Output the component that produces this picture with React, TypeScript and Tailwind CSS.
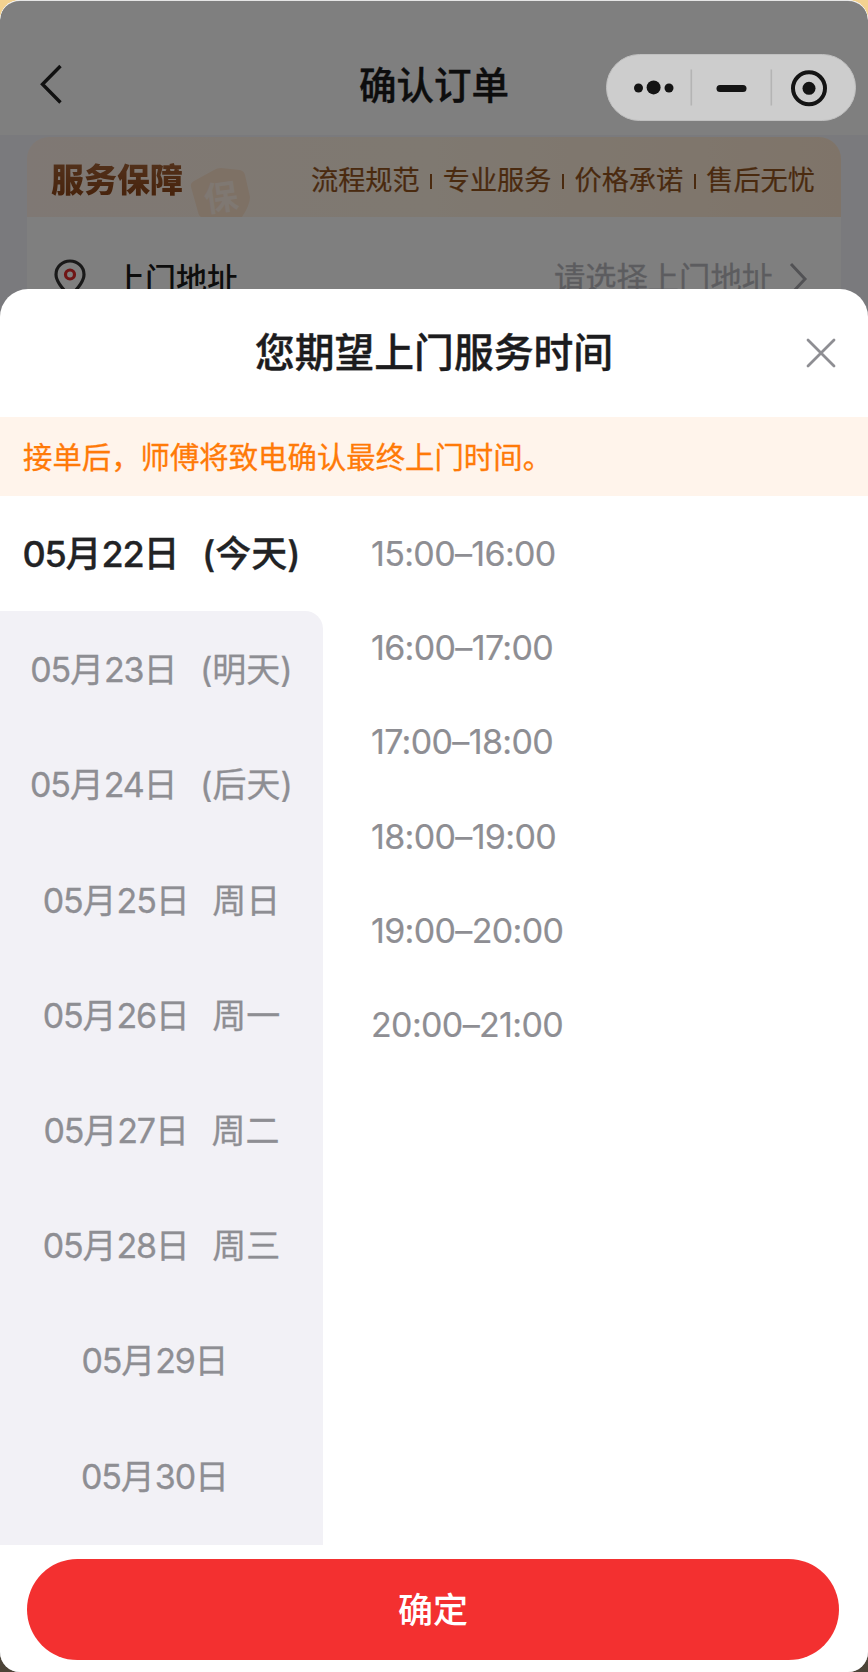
import React from 'react';

interface DateOption {
  date: string;
  label?: string;
}

const dates: DateOption[] = [
  { date: '22', label: '(今天)' },
  { date: '23', label: '(明天)' },
  { date: '24', label: '(后天)' },
  { date: '25', label: '周日' },
  { date: '26', label: '周一' },
  { date: '27', label: '周二' },
  { date: '28', label: '周三' },
  { date: '29' },
  { date: '30' },
];

const times = [
  '15:00–16:00',
  '16:00–17:00',
  '17:00–18:00',
  '18:00–19:00',
  '19:00–20:00',
  '20:00–21:00',
];

const promises = ['流程规范', '专业服务', '价格承诺', '售后无忧'];

function Header() {
  return (
    <header className="flex h-[135px] items-center justify-center bg-white pt-9">
      <svg className="absolute left-[37px] top-[62px]" width="28" height="44" fill="none" stroke="#222" strokeWidth="3.4">
        <path d="M23.5 4 5.5 22.3 23.5 40.5" />
      </svg>
      <h1 className="text-[37.5px] font-medium leading-none text-[#1a1a1a] [-webkit-text-stroke:0.4px]">确认订单</h1>
    </header>
  );
}

function Capsule() {
  return (
    <div className="absolute left-[606px] top-[54px] flex h-[67px] w-[250px] rounded-full border border-[#c0c0c0] bg-[#cdcdcd]">
      <svg width="248" height="65" viewBox="607 55 248 65" fill="#141414">
        <circle cx="638.5" cy="88" r="4.5" />
        <circle cx="653.6" cy="87.4" r="7" />
        <circle cx="669" cy="88" r="4.5" />
        <path d="M691.3 69.5v36M771.3 69.5v36" stroke="#b4b4b4" strokeWidth="1.6" />
        <rect x="716.5" y="85" width="30" height="7" rx="3.5" />
        <circle cx="809" cy="88.3" r="16" fill="none" stroke="#141414" strokeWidth="4" />
        <circle cx="809" cy="88.3" r="6.5" />
      </svg>
    </div>
  );
}

function Guarantee() {
  return (
    <div className="relative flex h-20 items-center justify-between overflow-hidden rounded-t-[22px] bg-linear-to-r from-[#fff1e8] via-[#fff2e2] to-[#ffe9d3] pl-6 pr-[26px] pt-1.5">
      <svg className="absolute left-[162px] top-[30px]" width="64" height="50">
        <path d="M5 14 25 3Q28 1 32 1L51 3q4 1 5 5l5 22q0 8-8 20H13q-3 0-4-5L2 20q-1-4 3-6Z" fill="#fce2cb" />
        <text x="15" y="43" fontSize="34" fontWeight="700" fill="#fff0e4" transform="rotate(-8 32 30)">
          保
        </text>
      </svg>
      <div className="bg-linear-to-b from-[#a8673a] to-[#8a4010] bg-clip-text text-[33px] font-black leading-[44px] text-transparent">
        服务保障
      </div>
      <div className="flex items-center pt-0.5 text-[27.2px] leading-10 text-[#94551f] [-webkit-text-stroke:0.2px]">
        {promises.map((item, i) => (
          <React.Fragment key={item}>
            {i > 0 && <span className="mx-[10.5px] h-[15px] w-[2px] bg-[#94551f]" />}
            <span>{item}</span>
          </React.Fragment>
        ))}
      </div>
    </div>
  );
}

function AddressRow() {
  return (
    <div className="flex h-[124px] items-center bg-white pl-[27px] pr-[33px]">
      <svg width="32" height="40" fill="none" strokeWidth="3.2">
        <path d="M16 37Q2 24 2 15.5A14 13.5 0 0 1 30 15.5Q30 24 16 37Z" stroke="#333" />
        <circle cx="16" cy="15.5" r="4.5" stroke="#e02a2a" />
      </svg>
      <span className="ml-[28px] text-[31px] font-medium text-[#1a1a1a]">上门地址</span>
      <span className="ml-auto text-[31.3px] text-[#b9b9be] [-webkit-text-stroke:0.3px]">请选择上门地址</span>
      <svg className="ml-[15px]" width="20" height="34" fill="none" stroke="#a5a5aa" strokeWidth="3">
        <path d="M3 2 17 17 3 32" />
      </svg>
    </div>
  );
}

function DateItem({ item, active }: { item: DateOption; active: boolean }) {
  return (
    <div
      className={`flex h-[115.2px] shrink-0 items-center justify-center ${
        active
          ? 'text-[36px] font-medium text-[#222325] [-webkit-text-stroke:0.3px]'
          : 'pt-0.5 text-[34px] text-[#8e8e93] [-webkit-text-stroke:0.3px]'
      }`}
    >
      <span>
        <span className="tracking-[-0.035em]">05</span>月
        <span className="tracking-[-0.035em]">{item.date}</span>日
      </span>
      <span className={item.label ? 'ml-[22.5px]' : 'ml-[13px]'}>{item.label}</span>
    </div>
  );
}

function TimeSheet() {
  return (
    <section className="relative -mt-[52px] flex h-[1383px] flex-col rounded-t-[28px] bg-white">
      <div className="relative flex h-[128px] items-center justify-center">
        <h2 className="text-[39.8px] font-medium leading-none text-[#1c1c1e] [-webkit-text-stroke:0.4px]">您期望上门服务时间</h2>
        <svg className="absolute right-[32px] top-[49px]" width="30" height="30" fill="none" stroke="#8e8e93" strokeWidth="2.8" strokeLinecap="round">
          <path d="M2 2 28 28M28 2 2 28" />
        </svg>
      </div>
      <div className="flex h-[79px] items-center bg-[#fff4eb] pl-[23px] pt-[3px] text-[29.4px] text-[#ff7a08] [-webkit-text-stroke:0.3px]">
        接单后，师傅将致电确认最终上门时间。
      </div>
      <div className="flex h-[1049px]">
        <div className="flex w-[323px] flex-col">
          <DateItem item={dates[0]} active />
          <div className="flex flex-1 flex-col rounded-tr-[18px] bg-[#f2f1f6]">
            {dates.slice(1).map((item) => (
              <DateItem key={item.date} item={item} active={false} />
            ))}
          </div>
        </div>
        <div className="flex flex-col pl-12 pt-[10px] text-[34px] tracking-[-0.65px] text-[#8e8e93] [-webkit-text-stroke:0.2px]">
          {times.map((time) => (
            <div key={time} className="flex h-[94.3px] items-center">
              {time}
            </div>
          ))}
        </div>
      </div>
      <button className="ml-[27px] mr-[29px] mt-[14px] h-[101px] rounded-full bg-[#f33030] pt-0.5 text-[35px] font-medium text-white">
        确定
      </button>
    </section>
  );
}

export default function App() {
  return (
    <div className="h-[1672px] w-[868px] bg-linear-to-b from-[#f3d290] from-50% to-[#4c4438] to-50% font-[Inter,'Noto_Sans_CJK_SC',sans-serif]">
      <div className="relative h-full overflow-hidden rounded-[20px] bg-[#f5f5fa]">
        <Header />
        <div className="mx-[27px] mt-[2px]">
          <Guarantee />
          <AddressRow />
        </div>
        <div className="absolute inset-0 rounded-[20px] border-t border-white/80 bg-black/50" />
        <Capsule />
        <TimeSheet />
      </div>
    </div>
  );
}
